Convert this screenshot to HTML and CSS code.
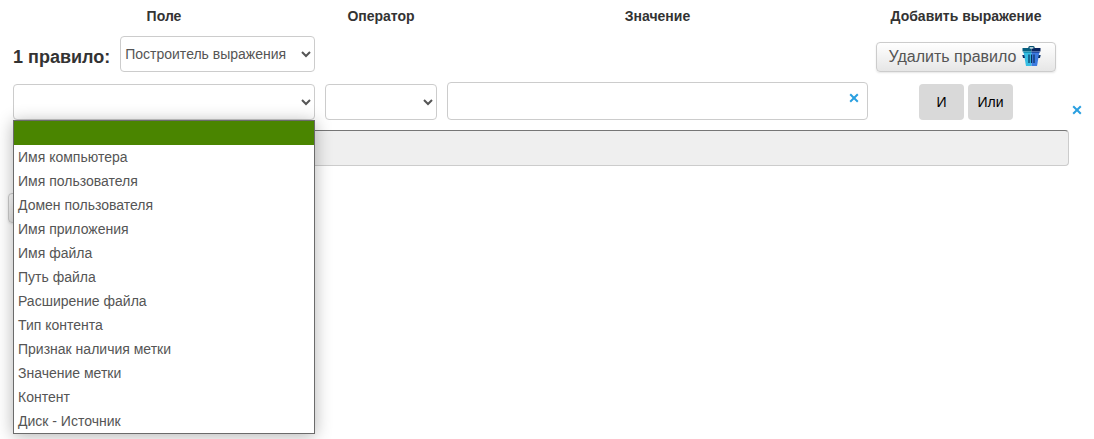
FILE: index.html
```html
<!DOCTYPE html>
<html lang="ru">
<head>
    <meta charset="UTF-8">
    <meta name="viewport" content="width=device-width, initial-scale=1.0">
    <title>Построитель выражения</title>
    <link rel="stylesheet" href="styles.css">
</head>
<body>

    <form class="builder">
        <!-- Column titles -->
        <div class="row titles">
            <div id="title-field">Поле</div>
            <div id="title-operator">Оператор</div>
            <div id="title-value">Значение</div>
            <div>Добавить выражение</div>
        </div>

        <!-- Rule header -->
        <div class="row rule">
            <div class="rule-name">
                <label for="rule-type">1 правило:</label>
                <select class="control" id="rule-type">
                    <option>Построитель выражения</option>
                </select>
            </div>
            <div class="rule-actions">
                <button type="button" class="btn">
                    <span>Удалить правило</span>
                    <svg class="trash" width="23" height="22" viewBox="-1.500 0 23 22" aria-hidden="true">
                        <path d="M2 6h8v14H4.500z" fill="#35bde3"/>
                        <path d="M10 6h8l-2.500 14H10z" fill="#3d7be0"/>
                        <path d="M1 2h9v3.500H1z" fill="#075f80"/>
                        <path d="M10 2h9v3.500h-9z" fill="#08245f"/>
                        <path d="M2 5.500h8v1.500H2z" fill="#1795b8"/>
                        <path d="M10 5.500h8v1.500h-8z" fill="#2350a8"/>
                        <path d="M7.500 2.500V1.500Q7.500 0.700 8.300 0.700H11.700Q12.500 0.700 12.500 1.500V2.500" fill="none" stroke="#075070" stroke-width="1.400"/>
                        <path d="M8.200 1.400h3.600v1.200H8.200z" fill="#d8eef4"/>
                        <path d="M0.800 9h2l0.700 3H1.500zM17.200 9h2l-0.700 3h-2z" fill="#08306b"/>
                        <path d="M7.500 8.500v8.500M10 8.500v8.500M12.500 8.500v8.500" stroke="#08305f" stroke-width="1.200"/>
                    </svg>
                </button>
            </div>
        </div>

        <!-- Expression -->
        <div class="row expression">
            <div class="dropdown">
                <select class="control" aria-labelledby="title-field">
                    <option></option>
                </select>
                <ul class="options" role="listbox" aria-labelledby="title-field">
                    <li class="selected" role="option" aria-selected="true"></li>
                    <li role="option">Имя компьютера</li>
                    <li role="option">Имя пользователя</li>
                    <li role="option">Домен пользователя</li>
                    <li role="option">Имя приложения</li>
                    <li role="option">Имя файла</li>
                    <li role="option">Путь файла</li>
                    <li role="option">Расширение файла</li>
                    <li role="option">Тип контента</li>
                    <li role="option">Признак наличия метки</li>
                    <li role="option">Значение метки</li>
                    <li role="option">Контент</li>
                    <li role="option">Диск - Источник</li>
                </ul>
            </div>
            <select class="control" aria-labelledby="title-operator">
                <option></option>
            </select>
            <div class="value">
                <input class="control" type="text" aria-labelledby="title-value">
                <button type="button" class="close clear" aria-label="Очистить">
                    <svg width="10" height="10" viewBox="0 0 10 10"><path d="M1.200 1.200L8.800 8.800M8.800 1.200L1.200 8.800"/></svg>
                </button>
            </div>
            <div class="logic">
                <button type="button" class="logic-btn">И</button>
                <button type="button" class="logic-btn">Или</button>
            </div>
            <button type="button" class="close remove" aria-label="Удалить выражение">
                <svg width="10" height="10" viewBox="0 0 10 10"><path d="M1.200 1.200L8.800 8.800M8.800 1.200L1.200 8.800"/></svg>
            </button>
        </div>

        <input class="control result" type="text" aria-label="Выражение" disabled>

        <button type="button" class="btn add" aria-label="Добавить правило"></button>
    </form>

</body>
</html>
```
FILE: styles.css
```css
* {
    box-sizing: border-box;
}
body {
    margin: 0;
    min-height: 100vh;
    background: #fff;
    color: #333;
    font-family: "Liberation Sans", Arial, sans-serif;
    font-size: 14px;
    line-height: 20px;
}
.builder {
    padding: 6px 4px 0 13px;
}
.row {
    display: grid;
    grid-template-columns: 302fr 112fr 421fr 176px 26px;
    column-gap: 10px;
}
.titles {
    font-weight: bold;
    text-align: center;
}
.control {
    width: 100%;
    height: 36px;
    margin: 0;
    padding: 0;
    background-color: #fff;
    border: 1px solid #ccc;
    border-radius: 4px;
    color: #555;
    font-family: inherit;
    font-size: 14px;
}

/* rule header */
.rule {
    margin-top: 10px;
}
.rule-name {
    display: flex;
    gap: 10px;
}
.rule-name label {
    flex: none;
    padding-top: 11px;
    font-size: 18px;
    font-weight: bold;
}
.rule-name .control {
    flex: 1;
    min-width: 0;
}
.rule-actions {
    grid-column: 4;
    display: flex;
    justify-content: center;
    align-items: flex-end;
}
.btn {
    display: flex;
    flex: none;
    align-items: center;
    gap: 4px;
    height: 30px;
    padding: 0 12px;
    background: linear-gradient(#fff, #e6e6e6);
    border: 1px solid #ccc;
    border-radius: 4px;
    box-shadow: 0 1px 2px rgba(0, 0, 0, 0.1);
    color: #555;
    font-family: inherit;
    font-size: 16px;
    white-space: nowrap;
    cursor: pointer;
}

/* expression */
.expression {
    align-items: end;
    margin-top: 10px;
}
.dropdown,
.value {
    position: relative;
}
.dropdown .control,
.value .control {
    display: block;
}
.value .control {
    height: 38px;
    padding: 0 30px 0 8px;
}
.options {
    position: absolute;
    top: 100%;
    left: 0;
    right: 0;
    z-index: 1;
    margin: 0;
    padding: 0;
    list-style: none;
    background: #fff;
    border: 1px solid #6b6b6b;
    box-shadow: 0 2px 16px rgba(0, 0, 0, 0.3);
    color: #555;
}
.options li {
    height: 24px;
    padding: 0 4px;
    line-height: 24px;
}
.options .selected {
    background: #4a8500;
}
.logic {
    display: flex;
    justify-content: center;
    gap: 4px;
}
.logic-btn {
    width: 45px;
    height: 36px;
    padding: 0;
    background: #d9d9d9;
    border: none;
    border-radius: 4px;
    color: #000;
    font-family: inherit;
    font-size: 14px;
    cursor: pointer;
}
.close {
    display: flex;
    align-items: center;
    justify-content: center;
    height: 20px;
    padding: 0;
    background: none;
    border: none;
    cursor: pointer;
}
.close path {
    stroke: #2a9fe0;
    stroke-width: 2;
}
.clear {
    position: absolute;
    top: 6px;
    right: 4px;
    width: 20px;
}
.result {
    display: block;
    width: calc(100% - 21px);
    margin-top: 10px;
    background-color: #efefef;
    border-top-color: #767676;
}
.add {
    width: 181px;
    margin: 27px 0 0 -5px;
}
```
